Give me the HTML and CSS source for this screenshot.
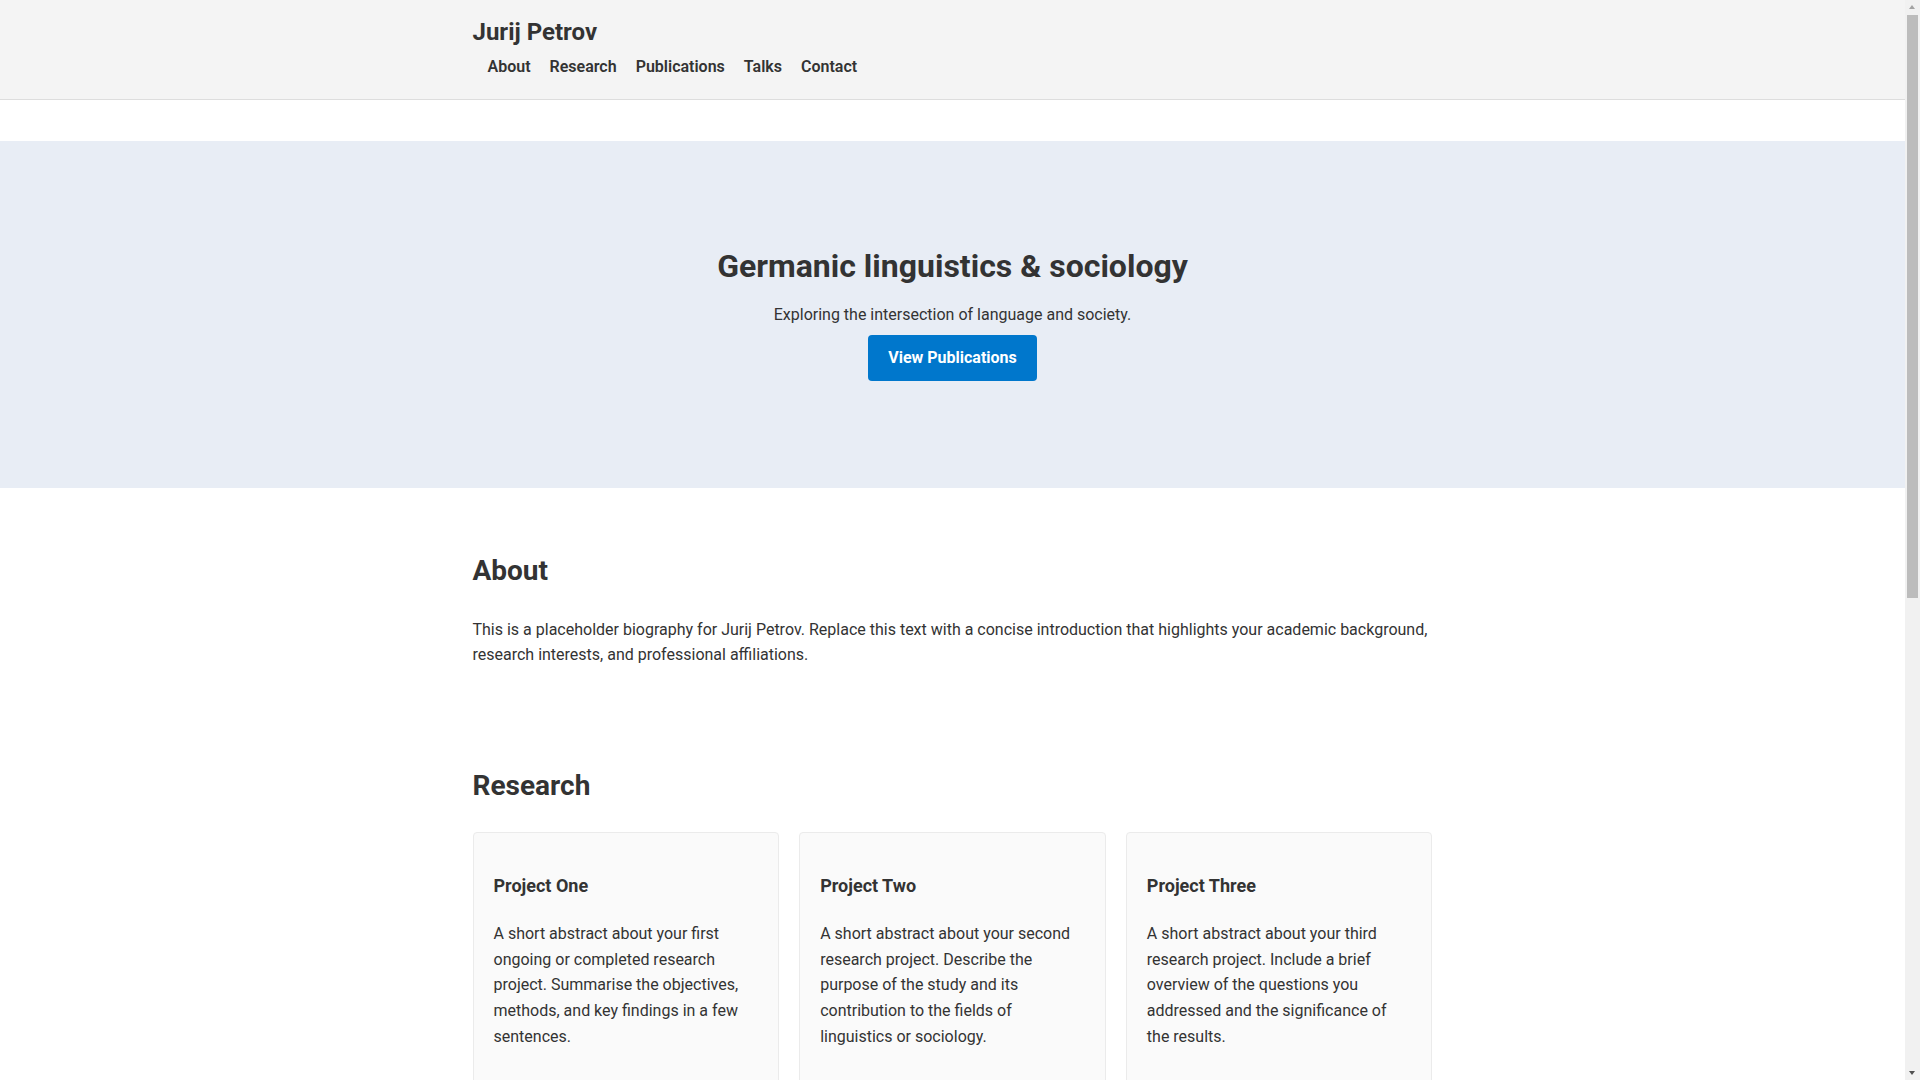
FILE: index.html
```html
<!DOCTYPE html>
<html lang="en">
<head>
<meta charset="utf-8">
<title>Jurij Petrov</title>
<link rel="stylesheet" href="styles.css">
</head>
<body>
<header class="site-header">
  <div class="container">
    <div class="site-title">Jurij Petrov</div>
    <nav class="site-nav">
      <a href="#about">About</a>
      <a href="#research">Research</a>
      <a href="#publications">Publications</a>
      <a href="#talks">Talks</a>
      <a href="#contact">Contact</a>
    </nav>
  </div>
</header>
<main class="main">
  <section class="hero">
    <div class="container hero-inner">
      <h1 class="hero-title">Germanic linguistics &amp; sociology</h1>
      <p class="hero-sub">Exploring the intersection of language and society.</p>
      <a class="btn" href="#publications">View Publications</a>
    </div>
  </section>

  <section class="section" id="about">
    <div class="container">
      <h2 class="section-title">About</h2>
      <p class="text">This is a placeholder biography for Jurij Petrov. Replace this text with a concise introduction that highlights your academic background, research interests, and professional affiliations.</p>
    </div>
  </section>

  <section class="section" id="research">
    <div class="container">
      <h2 class="section-title">Research</h2>
      <div class="cards">
        <div class="card">
          <h3 class="card-title">Project One</h3>
          <p class="card-text">A short abstract about your first ongoing or completed research project. Summarise the objectives, methods, and key findings in a few sentences.</p>
        </div>
        <div class="card">
          <h3 class="card-title">Project Two</h3>
          <p class="card-text">A short abstract about your second research project. Describe the purpose of the study and its contribution to the fields of linguistics or sociology.</p>
        </div>
        <div class="card">
          <h3 class="card-title">Project Three</h3>
          <p class="card-text">A short abstract about your third research project. Include a brief overview of the questions you addressed and the significance of the results.</p>
        </div>
      </div>
    </div>
  </section>

  <section class="section" id="publications">
    <div class="container">
      <h2 class="section-title">Publications</h2>
      <ul class="list">
        <li>Petrov, J. (2023). Title of a journal article. <em>Journal Name</em>, 12(3), 45–67.</li>
        <li>Petrov, J. (2021). Title of a book chapter. In A. Editor (Ed.), <em>Book Title</em> (pp. 10–30). Publisher.</li>
        <li>Petrov, J. (2019). Title of a conference paper. <em>Proceedings of the Conference</em>.</li>
      </ul>
    </div>
  </section>

  <section class="section" id="talks">
    <div class="container">
      <h2 class="section-title">Talks</h2>
      <ul class="list">
        <li>“Title of a recent talk”, Conference Name, City, 2024.</li>
        <li>“Title of an invited lecture”, University Name, City, 2022.</li>
      </ul>
    </div>
  </section>

  <section class="section" id="contact">
    <div class="container">
      <h2 class="section-title">Contact</h2>
      <p class="text">Email: jurij.petrov@example.com<br>Department of Germanic Studies, University Name</p>
    </div>
  </section>
</main>

<div class="scrollbar" aria-hidden="true">
  <span class="sb-arrow sb-up"></span>
  <span class="sb-thumb"></span>
  <span class="sb-arrow sb-down"></span>
</div>
</body>
</html>
```

FILE: styles.css
```css
* { box-sizing: border-box; }

html, body {
  margin: 0;
  padding: 0;
}

body {
  margin-right: 15px;
  font-family: Roboto, "Liberation Sans", Arial, sans-serif;
  font-size: 16px;
  line-height: 1.6;
  color: #333333;
  background: #ffffff;
}

.container {
  max-width: 960px;
  margin: 0 auto;
}

.site-header {
  background: #f4f4f4;
  border-bottom: 1px solid #dddddd;
  padding: 18px 0 19.4px;
}

.site-title {
  font-size: 24px;
  font-weight: 700;
  line-height: 29px;
}

.site-nav {
  display: flex;
  gap: 19px;
  margin-top: 7px;
  padding-left: 15px;
}

.site-nav a {
  color: #333333;
  text-decoration: none;
  font-weight: 600;
  line-height: 25.6px;
}

.main {
  padding-top: 41px;
}

.hero {
  background: #e8edf5;
  padding: 106px 0 107.3px;
}

.hero-inner {
  display: flex;
  flex-direction: column;
  align-items: center;
  text-align: center;
}

.hero-title {
  margin: 0;
  font-size: 32px;
  line-height: 1.2;
  font-weight: 700;
}

.hero-sub {
  margin: 17px 0 7.3px;
}

.btn {
  display: inline-block;
  background: #0077cc;
  color: #ffffff;
  text-decoration: none;
  font-weight: 700;
  padding: 10px 20px;
  border-radius: 4px;
}

.section {
  padding: 65.6px 0 35px;
}

.section-title {
  margin: 0 0 29.5px;
  font-size: 28px;
  line-height: 1.2;
  font-weight: 700;
}

.text {
  margin: 0;
}

.cards {
  display: grid;
  grid-template-columns: repeat(3, 1fr);
  gap: 20px;
}

.card {
  background: #fafafa;
  border: 1px solid #ebebeb;
  border-radius: 4px;
  padding: 20px;
}

.card-title {
  margin: 19.2px 0 20.6px;
  font-size: 18px;
  font-weight: 700;
  line-height: 1.6;
}

.card-text {
  margin: 0 0 16px;
}

.list {
  margin: 0;
  padding-left: 20px;
}

.list li {
  margin-bottom: 12px;
}

/* classic browser scrollbar, drawn over the right edge */
.scrollbar {
  position: fixed;
  top: 0;
  right: 0;
  width: 15px;
  height: 100vh;
  background: #f1f1f1;
}

.sb-thumb {
  position: absolute;
  left: 2px;
  right: 2px;
  top: 15px;
  height: 583px;
  background: #bcbcbc;
}

.sb-arrow {
  position: absolute;
  left: 4px;
  width: 0;
  height: 0;
  border-left: 3.5px solid transparent;
  border-right: 3.5px solid transparent;
}

.sb-up {
  top: 5px;
  border-bottom: 4px solid #a3a3a3;
}

.sb-down {
  bottom: 5px;
  border-top: 4px solid #505050;
}
```
